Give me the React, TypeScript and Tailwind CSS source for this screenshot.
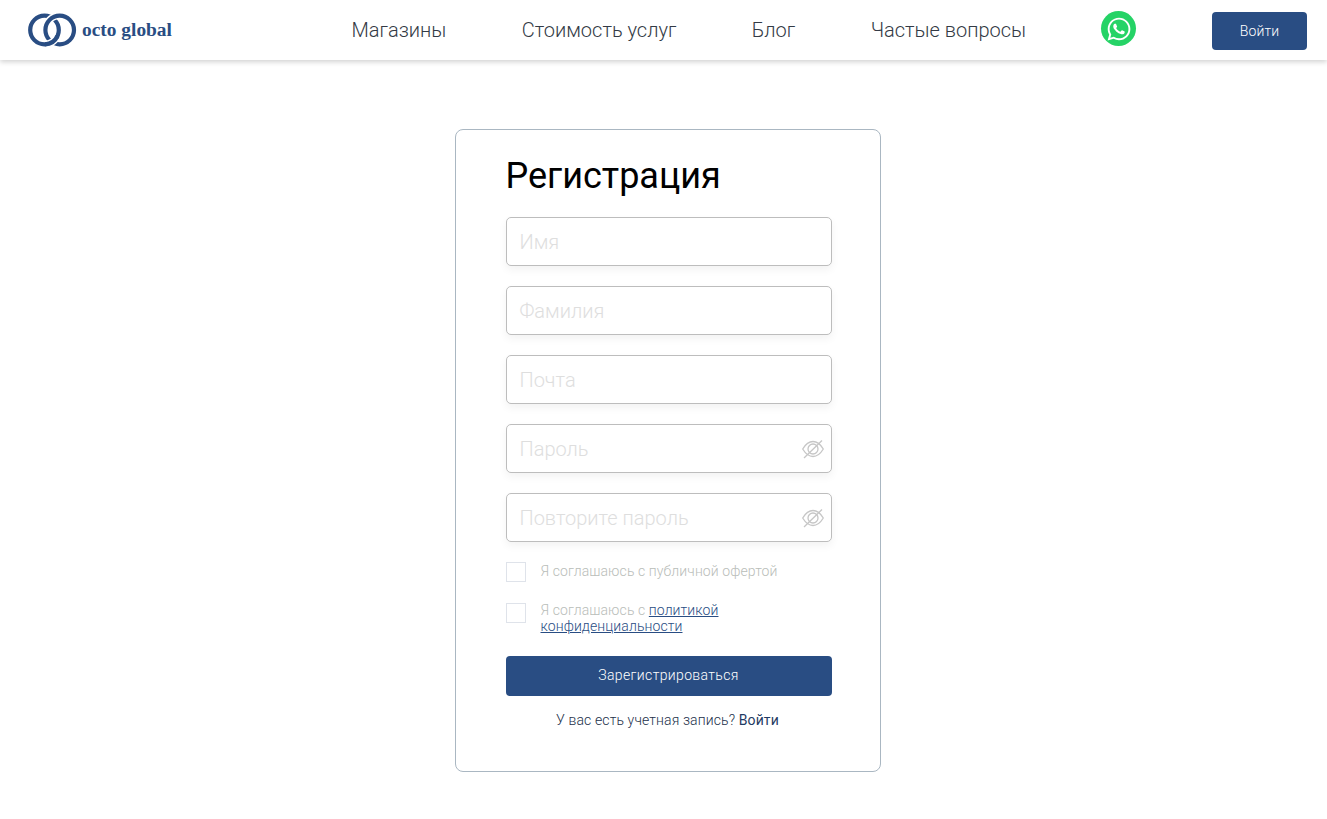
import { FaWhatsapp } from 'react-icons/fa';

const BLUE = 'bg-[#294d83]';

const Logo = () => (
  <div className="flex items-center">
    <svg width="49" height="34" viewBox="0 0 49 34" fill="none" strokeWidth="4.2">
      <circle cx="16.5" cy="17" r="14.3" stroke="#294d83" />
      <path d="M29.9 2.8 A14.3 14.3 0 0 0 19.7 9.2" stroke="#ffffff" strokeWidth="7.2" />
      <circle cx="31.7" cy="17" r="14.3" stroke="#294d83" />
      <path d="M28.5 24.8 A14.3 14.3 0 0 1 18.3 31.2" stroke="#ffffff" strokeWidth="7.2" />
      <path d="M29.5 23 A14.3 14.3 0 0 1 17 31.3" stroke="#294d83" />
    </svg>
    <span className="ml-[5px] font-['Liberation_Serif',serif] text-[19.4px] font-bold leading-none text-[#294d83]">
      octo global
    </span>
  </div>
);

const EyeSlash = () => (
  <svg width="22" height="22" viewBox="0 0 22 22" fill="none" stroke="#c6c6c6" strokeWidth="1.3">
    <path d="M0.7 11 C4 5.5 7.5 3.5 11 3.5 C14.5 3.5 18 5.5 21.3 11 C18 16.5 14.5 18.5 11 18.5 C7.5 18.5 4 16.5 0.7 11 Z" />
    <circle cx="11" cy="11" r="5" />
    <path d="M2 20 L20 2.5" />
  </svg>
);

const fields = [
  { placeholder: 'Имя' },
  { placeholder: 'Фамилия' },
  { placeholder: 'Почта' },
  { placeholder: 'Пароль', eye: true },
  { placeholder: 'Повторите пароль', eye: true },
];

const App = () => {
  return (
    <div className="min-h-[819px] bg-white font-['Roboto',sans-serif]">
      <header className="flex h-[60px] items-center bg-white pl-[28px] pr-[20px] shadow-[0_2px_5px_rgba(0,0,0,0.18)]">
        <Logo />
        <nav className="ml-[179.5px] flex items-center gap-[75.4px] text-[20px] font-light text-[#333a45]">
          <a>Магазины</a>
          <a>Стоимость услуг</a>
          <a>Блог</a>
          <a>Частые вопросы</a>
        </nav>
        <div className="mb-[3px] ml-[75px] flex h-[35px] w-[35px] items-center justify-center rounded-full bg-[#25d366]">
          <FaWhatsapp className="h-[26px] w-[26px] text-white" />
        </div>
        <button className={`ml-auto mt-[2px] h-[38px] w-[95px] rounded-[4px] ${BLUE} text-[14px] font-[350] tracking-[0.1px] text-white`}>
          Войти
        </button>
      </header>

      <main className="flex justify-center pl-[8px] pt-[69px]">
        <div className="h-[643px] w-[426px] rounded-[8px] border border-[#aab7c2] pl-[50px] pr-[48px]">
          <h1 className="mt-[25px] h-[42px] text-[36px] font-normal leading-[42px] text-black">Регистрация</h1>
          <div className="mt-[20px] flex flex-col gap-[20px]">
            {fields.map((f) => (
              <div
                key={f.placeholder}
                className="flex h-[49px] items-center justify-between rounded-[5px] border border-[#bdbdbd] bg-white pl-[13px] pr-[7px] shadow-[0_4px_8px_rgba(0,0,0,0.05)]"
              >
                <span className="text-[20px] font-light text-[#dedede]">{f.placeholder}</span>
                {f.eye && <EyeSlash />}
              </div>
            ))}
          </div>
          <div className="mt-[20px] flex items-start gap-[15px]">
            <div className="h-[20px] w-[20px] border border-[#dfe3ea]" />
            <span className="pt-[1px] text-[14px] font-light leading-[16px] tracking-[0.1px] text-[#b9bdb9]">
              Я соглашаюсь с публичной офертой
            </span>
          </div>
          <div className="mt-[21px] flex items-start gap-[15px]">
            <div className="h-[20px] w-[20px] shrink-0 border border-[#dfe3ea]" />
            <div className="-mt-[1px] text-[14px] font-light leading-[16px] tracking-[0.1px] text-[#b9bdb9]">
              <div>
                Я соглашаюсь с <a className="text-[#294d83] underline">политикой</a>
              </div>
              <a className="block text-[#294d83] underline">конфиденциальности</a>
            </div>
          </div>
          <button className={`mt-[22px] h-[40px] w-full rounded-[4px] ${BLUE} pb-[1px] text-[14px] font-[350] tracking-[0.36px] text-white`}>
            Зарегистрироваться
          </button>
          <p className="mt-[16px] pr-[2px] text-center text-[14px] font-light leading-[16px] tracking-[0.12px] text-[#22304a]">
            У вас есть учетная запись? <a className="font-normal text-[#1f3a63]">Войти</a>
          </p>
        </div>
      </main>
    </div>
  );
};

export default App;
